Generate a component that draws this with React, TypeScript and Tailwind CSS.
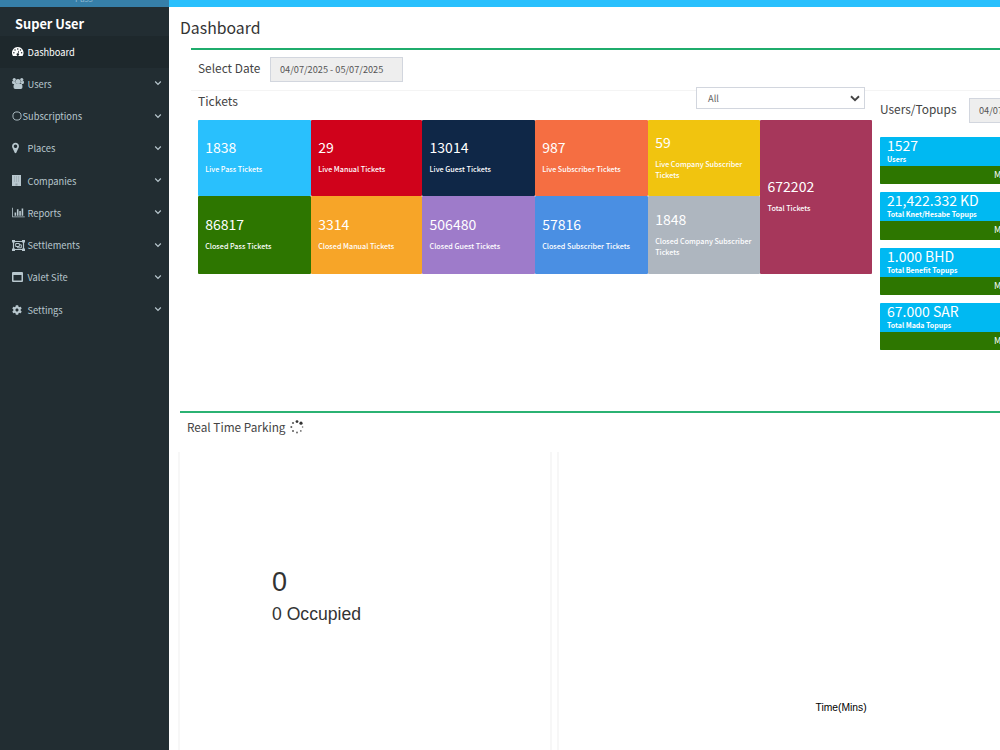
import React from "react";
import { FaCog } from "react-icons/fa";
import clsx from "clsx";

interface MenuItem {
    label: string;
    icon: React.ReactNode;
    active?: boolean;
    tight?: boolean;
}

const GaugeIcon = () => (
    <svg viewBox="0 0 22 18" className="w-[11.5px] h-[9.5px]">
        <path fill="currentColor" d="M11 0a11 11 0 0 1 9.2 17q-.3.6-1 .6H2.8q-.7 0-1-.6A11 11 0 0 1 11 0z" />
        <g fill="#1e282c">
            <circle cx="3.6" cy="11" r="1.4" />
            <circle cx="5.8" cy="5.8" r="1.4" />
            <circle cx="11" cy="3.6" r="1.4" />
            <circle cx="16.2" cy="5.8" r="1.4" />
            <circle cx="18.4" cy="11" r="1.4" />
            <path d="m12.300 7 1.300.4-1.300 5a2.300 2.300 0 1 1-1.300-.3z" />
        </g>
    </svg>
);

const UsersIcon = () => (
    <svg viewBox="0 0 24 22" className="w-[12px] h-[11px]" fill="currentColor">
        <circle cx="4.5" cy="3.2" r="3.2" />
        <circle cx="19.5" cy="3.2" r="3.2" />
        <circle cx="12" cy="6.8" r="5" />
        <path d="M0 8.5q0-3 1.700-3 3 1.800 5.300.8 0 3 1.500 5.700H2q-2 0-2-3.500zM24 8.500q0-3-1.700-3-3 1.800-5.300.8 0 3-1.500 5.700H22q2 0 2-3.500zM3 18q0-7.500 4.800-7.500 4.200 3 8.400 0 4.800 0 4.800 7.500 0 4-3.500 4h-11q-3.500 0-3.500-4z" />
    </svg>
);

const BarsIcon = () => (
    <svg viewBox="0 0 2048 1792" className="w-[13px] h-[11px]" fill="currentColor">
        <path d="M640 896v512h-256v-512h256zm384-512v1024h-256v-1024h256zm1024 1152v128h-2048v-1536h128v1408h1920zm-640-896v768h-256v-768h256zm384-384v1152h-256v-1152h256z" />
    </svg>
);

const MarkerIcon = () => (
    <svg viewBox="0 0 1024 1792" className="w-[7px] h-[12px]" fill="currentColor">
        <path d="M768 640q0-106-75-181t-181-75-181 75-75 181 75 181 181 75 181-75 75-181zm256 0q0 109-33 179l-364 774q-16 33-47.5 52t-67.5 19-67.5-19-46.5-52l-365-774q-33-70-33-179 0-212 150-362t362-150 362 150 150 362z" />
    </svg>
);

const BuildingIcon = () => (
    <svg viewBox="0 0 9 11" className="w-[9px] h-[11px]">
        <path fill="currentColor" d="M0 0h9v11H0z" />
        <path fill="#222d32" opacity="0.25" d="M2 1.5h1v1H2zM4 1.5h1v1H4zM6 1.5h1v1H6zM2 3.5h1v1H2zM4 3.5h1v1H4zM6 3.5h1v1H6zM2 5.5h1v1H2zM4 5.5h1v1H4zM6 5.5h1v1H6zM3.5 8.5h2v2h-2z" />
    </svg>
);

const GroupIcon = () => (
    <svg viewBox="0 0 13 11" className="w-[13px] h-[11px]" fill="none" stroke="currentColor">
        <path d="M1.5 1.5h10v8h-10z" strokeWidth="1.2" />
        <path d="M3.7 3.5h3.6v3H3.7zM7.3 4.8h2v3H5.6V6.5" />
        <path fill="currentColor" stroke="none" d="M0 0h3v2.5H0zM10 0h3v2.5h-3zM0 8.5h3V11H0zM10 8.5h3V11h-3z" />
    </svg>
);

const WindowIcon = () => (
    <svg viewBox="0 0 11 10" className="w-[11px] h-[10px]">
        <path fill="currentColor" fillRule="evenodd" d="M1 0h9a1 1 0 0 1 1 1v8a1 1 0 0 1-1 1H1a1 1 0 0 1-1-1V1a1 1 0 0 1 1-1zM1.5 3v5.5h8V3z" />
    </svg>
);

const CircleIcon = () => (
    <svg viewBox="0 0 10 10" className="w-[10px] h-[10px]" fill="none" stroke="currentColor" strokeWidth="0.9">
        <circle cx="5" cy="5" r="4.1" />
    </svg>
);

const AngleDown = () => (
    <svg viewBox="0 0 8 6" className="-mt-0.5 w-2 h-1.5" fill="none" stroke="currentColor" strokeWidth="1.2">
        <path d="M1.2 1.5 4 4.3 6.8 1.5" />
    </svg>
);

// eight dots fading around the ring
const Spinner = () => (
    <svg viewBox="0 0 14 14" className="w-3.5 h-3.5" fill="#333">
        <circle cx="7" cy="1.6" r="1.4" />
        <circle cx="11" cy="3.2" r="1.6" />
        <circle cx="12.6" cy="7" r="0.8" opacity="0.7" />
        <circle cx="10.8" cy="10.9" r="0.9" opacity="0.7" />
        <circle cx="7" cy="12.5" r="0.9" opacity="0.8" />
        <circle cx="3" cy="10.9" r="1" opacity="0.8" />
        <circle cx="1.3" cy="7" r="1" opacity="0.8" />
        <circle cx="3" cy="3" r="1.1" opacity="0.8" />
    </svg>
);

const menu: MenuItem[] = [
    { label: "Dashboard", icon: <GaugeIcon />, active: true },
    { label: "Users", icon: <UsersIcon /> },
    { label: "Subscriptions", icon: <CircleIcon />, tight: true },
    { label: "Places", icon: <MarkerIcon /> },
    { label: "Companies", icon: <BuildingIcon /> },
    { label: "Reports", icon: <BarsIcon /> },
    { label: "Settlements", icon: <GroupIcon /> },
    { label: "Valet Site", icon: <WindowIcon /> },
    { label: "Settings", icon: <FaCog size={10} /> },
];

const tickets = [
    { value: "1838", label: "Live Pass Tickets", color: "bg-[#29c0fd]" },
    { value: "29", label: "Live Manual Tickets", color: "bg-[#d0021b]" },
    { value: "13014", label: "Live Guest Tickets", color: "bg-[#0f2747]" },
    { value: "987", label: "Live Subscriber Tickets", color: "bg-[#f56e42]" },
    { value: "59", label: "Live Company Subscriber Tickets", color: "bg-[#f1c40f]" },
    { value: "672202", label: "Total Tickets", color: "bg-[#a6375b] row-span-2" },
    { value: "86817", label: "Closed Pass Tickets", color: "bg-[#2d7600]" },
    { value: "3314", label: "Closed Manual Tickets", color: "bg-[#f7a528]" },
    { value: "506480", label: "Closed Guest Tickets", color: "bg-[#9e7bca]" },
    { value: "57816", label: "Closed Subscriber Tickets", color: "bg-[#4a8fe3]" },
    { value: "1848", label: "Closed Company Subscriber Tickets", color: "bg-[#aeb6bf]" },
];

const topups = [
    { value: "1527", label: "Users" },
    { value: "21,422.332 KD", label: "Total Knet/Hesabe Topups" },
    { value: "1.000 BHD", label: "Total Benefit Topups" },
    { value: "67.000 SAR", label: "Total Mada Topups" },
];

function Sidebar() {
    return (
        <aside className="w-[169px] shrink-0 bg-[#222d32] text-[#b8c7ce]">
            <div className="h-[7px] overflow-hidden bg-[#367fa9] pl-[75px]">
                <div className="-mt-[7px] text-[8.5px] leading-[10px] text-[#8db8d2]">Pass</div>
            </div>
            <div className="h-[29px] pl-[15px] pt-[7px] text-[12.8px] leading-[20px] font-bold text-white">Super User</div>
            <ul>
                {menu.map((item) => (
                    <li
                        key={item.label}
                        className={clsx(
                            "flex h-[32.25px] items-center pl-3 pr-[7px] text-[9.3px]",
                            item.active && "bg-[#1e282c] text-white"
                        )}
                    >
                        <span className={clsx("flex shrink-0 pb-px", item.tight ? "w-[10.5px]" : "w-[15.5px]")}>{item.icon}</span>
                        <span className="grow pt-px">{item.label}</span>
                        {!item.active && <AngleDown />}
                    </li>
                ))}
            </ul>
        </aside>
    );
}

function TicketsPanel() {
    return (
        <div className="ml-[7px] w-[674px]">
            <div className="flex h-[29px] items-start">
                <h3 className="grow text-[12.1px] leading-[20px]">Tickets</h3>
                <div className="relative -mt-1 mr-[7px] flex h-[22px] w-[169px] items-center justify-between border border-[#d2d6de] bg-white pl-[11px] pr-1 text-[9.3px] text-[#666]">
                    <span className="pt-px">All</span>
                    <svg viewBox="0 0 10 7" className="w-2.5 h-[7px]" fill="none" stroke="#444" strokeWidth="1.9">
                        <path d="M1 1.3 5 5.1 9 1.3" />
                    </svg>
                </div>
            </div>
            <div className="grid h-[154px] grid-cols-[113px_111.4px_112.6px_113px_112.4px_111.6px] grid-rows-[76px_78px]">
                {tickets.map((t) => (
                    <div key={t.label} className={clsx("flex flex-col justify-center rounded-[1px] px-[7.2px] pb-[2px] text-white", t.color)}>
                        <div className="text-[14px] leading-[18px]">{t.value}</div>
                        <div className="mt-[8px] text-[7.2px] leading-[11.5px] font-medium">{t.label}</div>
                    </div>
                ))}
            </div>
        </div>
    );
}

function TopupsPanel() {
    return (
        <div className="ml-2 w-[264px] shrink-0">
            <div className="flex h-[46px] items-start pt-[7px]">
                <h3 className="w-[89px] shrink-0 pt-[1px] text-[11.9px] leading-[20px]">Users/Topups</h3>
                <div className="h-[25px] w-[133px] border border-[#d2d6de] bg-[#eee] pl-[9px] text-[9.2px] leading-[22px] text-[#555]">
                    04/07/2025 - 05/07/2025
                </div>
            </div>
            <div className="flex flex-col gap-2">
                {topups.map((t) => (
                    <div key={t.label} className="h-[47.25px] overflow-hidden rounded-[1px] bg-[#00b9f2] text-white">
                        <div className="h-[29px] pl-[7px]">
                            <div className="text-[14px] leading-[16px]">{t.value}</div>
                            <div className="text-[7px] leading-[12px] font-bold">{t.label}</div>
                        </div>
                        <div className="h-[19px] bg-[#2d7600] pl-[114px] text-[9px] leading-[18px]">More info</div>
                    </div>
                ))}
            </div>
        </div>
    );
}

export default function App() {
    return (
        <div className="flex h-[750px] w-[1000px] overflow-hidden bg-[#222d32] font-['Noto_Sans_CJK_SC','Noto_Sans',sans-serif] text-[#444]">
            <Sidebar />
            <main className="flex w-[831px] shrink-0 flex-col overflow-hidden bg-white">
                <div className="h-[7px] shrink-0 bg-[#29c0fd]" />
                <h1 className="h-[41px] shrink-0 pl-[11px] pt-[8px] text-[15.8px] leading-[25px] text-[#333]">Dashboard</h1>

                <section className="ml-[22px] h-[363px] w-[980px] shrink-0 border-t-2 border-[#1fac6c]">
                    <div className="flex h-[40px] items-start pl-[7px] pt-[7px]">
                        <h3 className="w-[72px] pt-[1px] text-[11.9px] leading-[20px]">Select Date</h3>
                        <div className="h-[25px] w-[133px] border border-[#d2d6de] bg-[#eee] pl-[9px] text-[9.2px] leading-[22px] text-[#555]">
                            04/07/2025 - 05/07/2025
                        </div>
                    </div>
                    <div className="flex border-t border-[#f4f4f4]">
                        <TicketsPanel />
                        <TopupsPanel />
                    </div>
                </section>

                <section className="ml-[11px] flex w-[900px] grow flex-col border-t-2 border-[#2bb273]">
                    <div className="flex h-[39px] items-start gap-[5px] pl-[7px] pt-[4px]">
                        <h3 className="text-[11.8px] leading-[20px]">Real Time Parking</h3>
                        <div className="pt-[3px]">
                            <Spinner />
                        </div>
                    </div>
                    <div className="flex grow gap-[5px] font-['Liberation_Sans',Arial,sans-serif] text-[#333]">
                        <div className="-ml-[2px] w-[374px] border-x-2 border-[#f7f7f7] pl-[92px] pt-[114px]">
                            <div className="text-[27px] leading-[32px]">0</div>
                            <div className="mt-[6px] text-[17.6px] leading-[20px]">0 Occupied</div>
                        </div>
                        <div className="w-[500px] border-l-2 border-[#f7f7f7] pl-[256.5px] pt-[250px] text-[10.3px] leading-[12px] text-black">
                            Time(Mins)
                        </div>
                    </div>
                </section>
            </main>
        </div>
    );
}
